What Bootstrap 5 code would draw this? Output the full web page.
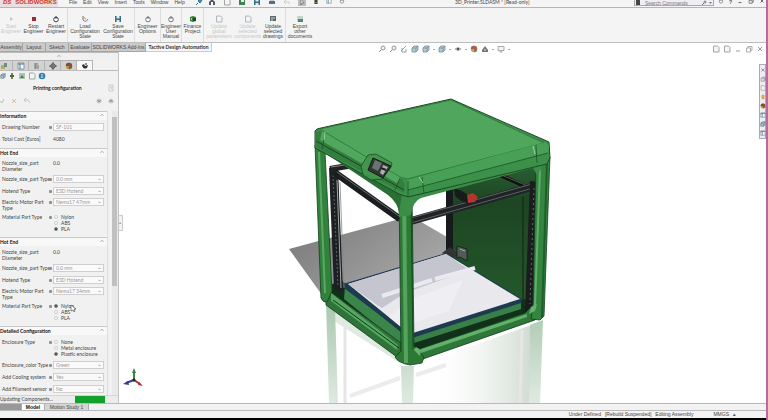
<!DOCTYPE html>
<html lang="en">
<head>
<meta charset="utf-8">
<meta name="viewport" content="width=device-width, initial-scale=1">
<title>3D_Printer.SLDASM</title>
<link href="https://cdn.jsdelivr.net/npm/bootstrap@5.3.0/dist/css/bootstrap.min.css" rel="stylesheet">
<style>
body{font:5px/6px "Liberation Sans",Arial,sans-serif;color:#444;background:#fff;border-right:2px solid #b86a9c}
button,input,select{font:inherit;color:inherit}
button{border:0;background:none;padding:0}
a{color:inherit;text-decoration:none}
svg{display:block;flex:none}
.ic{width:8px;height:8px}
.ic6{width:6px;height:6px}
.titlebar{height:8px;background:#f4f4f4;border-bottom:1px solid #b5b5b5;line-height:5px}
.brand{width:58px;background:#eadede;color:#c8382f;font-weight:700;font-size:6px;padding-left:3px;gap:4px}
.menus{gap:6px;padding-left:11px;width:142px}
.quick{gap:7px;width:240px}
.quick svg,.wctl svg,.menus svg{margin-top:-2px}
.doc{font-family:Lato,sans-serif;padding-left:15px}
.search{width:80px;height:6px;background:#eeeef4;border:1px solid #aaa;border-top:0;color:#777}
.search input{width:56px;height:5px;border:0;background:none;padding:0}
.search input::placeholder{color:#777;opacity:1}
.wctl{gap:5px;padding:0 1px 0 4px}
.ribbon{display:grid;grid-template-columns:22px 23px 23px 34px 33px 26px 21px 22px 30px 27px 25px 28px;height:35px;background:#f4f4f4;border-bottom:1px solid #bdbdbd;line-height:5px}
.ribbon button{padding-top:7px;gap:1px;white-space:nowrap;display:flex;flex-direction:column;align-items:center}
.ribbon .sep{border-right:1px solid #ddd}
.off{color:#bbb;opacity:.8}
.tabrow{height:9px;line-height:8px}
.cmd button{background:#cacaca;border:1px solid #a5a5a5;border-top:0;border-left:0;height:9px;overflow:hidden;white-space:nowrap;display:flex;justify-content:center}
.cmd .on{background:#f6f6f6;border-color:#ccc;font-weight:700;font-family:Lato,sans-serif;color:#333}
.w23{width:23px}.w54{width:54px}.w66{width:66px}
.hud{padding-top:2px;gap:3px;margin-left:166px;opacity:.85}
.hud i{width:2px;height:1px;background:#999;margin-top:4px}
.docctl{gap:3px;padding:2px 2px 0 0;color:#999}
.side{width:119px;background:#f1f1f1;border-right:1px solid #c4c4c4;font-family:Lato,"Liberation Sans",sans-serif}
.grip{height:8px;background:#f0f0f0;border-top:1px solid #bbb}
.ptabs{height:11px;background:#f1f1f1;border-bottom:1px solid #bbb}
.ptabs button{width:16px;background:#d2d2d2;border:1px solid #b2b2b2;border-bottom:0;border-left:0;display:flex;align-items:center;justify-content:center}
.ptabs button:first-child{width:13px;padding-right:4px}
.ptabs .on{background:#f8f8f8}
.minis{height:10px;gap:2px}
.pt{height:14px;color:#222;font-weight:700;padding:0 3px 0 33px}
.okrow{height:16px;padding:0 3px 4px 0;gap:4px}
.scroller{width:6px;background:#e9e9e9}
.thumb{width:5px;height:169px;background:#c0c0c0;margin-top:6px}
.sect{border-right:1px solid #ddd}
.sect h2{font-size:5px;line-height:8px;height:9px;margin:0;border-top:1px solid #c9c9c9;background:#f8f8f8;color:#111;font-weight:700;padding-right:2px}
.prow{display:grid;grid-template-columns:47px 4px minmax(0,1fr);min-height:12px;padding:0 3px 0 2px;align-items:center;white-space:nowrap}
.prow.two{align-items:start;margin-bottom:1px;min-height:12px}
.prow.rad{align-items:start;min-height:18px}
.prow .form-control,.prow .form-select{height:8px;min-height:0;padding:0 2px;font-size:5px;line-height:6px;border:1px solid #cfcfcf;border-radius:0;color:#999;background-color:#fafafa}
.prow .form-select{background-size:3px 3px;background-position:right 2px center}
.prow.two .form-select{margin-top:-1px}
.lock{width:3px;height:3px;background:#8a9296;border-radius:1px}
.two .lock,.rad .lock{margin-top:2px}
.rad label{display:flex;align-items:center;gap:3px;height:6px;padding-left:1px}
.rad input{appearance:none;width:4px;height:4px;margin:0;border:1px solid #ccc;border-radius:50%;background:#fff}
.rad input:checked{background:#444;border-color:#888}
.b1{padding:1px 0 3px}.b2{padding:3px 0 5px}.b4{padding:4px 0 0}
.mt3{margin-top:3px}.mt2{margin-top:2px}
.upd{height:8px;background:#ececec;border-top:1px solid #d5d5d5}
.upd .progress{width:30px;height:7px;border-radius:0;margin-right:13px}
.upd .progress-bar{background:#14a02d}
.handle{left:119px;top:163px;width:4px;height:16px;background:#f2f2f2;border:1px solid #ccc;border-left:0;font-size:3px;line-height:14px}
.pointer{left:70px;top:252px}
.task{right:0;top:12px;width:7px;background:#eee;border:1px solid #aab;gap:3px;padding:2px 0;color:#778}
.btabs{height:8px;background:#f2f2f2;border-top:1px solid #b8b8b8;border-bottom:1px solid #b8b8b8;line-height:6px}
.btabs button{background:#d5d5d5;border-right:1px solid #aaa;white-space:nowrap}
.btabs .nav0{width:22px;background:#999}
.btabs .on{background:#fff;width:23px;font-weight:700;color:#111}
.btabs .ms{width:44px}
.stat{height:7px;background:#f3f3f3;line-height:7px;padding-right:30px}
.foot{height:2px;background:#000}
</style>
<script src="https://cdn.jsdelivr.net/npm/bootstrap@5.3.0/dist/js/bootstrap.bundle.min.js"></script>
</head>
<body class="d-flex flex-column vh-100 overflow-hidden">
<svg width="0" height="0" class="position-absolute" aria-hidden="true">
<defs>
<symbol id="lens" viewBox="0 0 8 8"><circle cx="5" cy="3" r="2" fill="#edf3f6" stroke="#7c8991"/><path d="M3.5 4.5 1 7" stroke="#777"/></symbol>
<symbol id="cube" viewBox="0 0 8 8"><path d="M1 3 3 1h4v4L5 7H1z" fill="#a8c2cd" stroke="#5f7985" stroke-width=".8"/><path d="M1 3h4v4M5 3l2-2" stroke="#5f7985" stroke-width=".8" fill="none"/></symbol>
<symbol id="page" viewBox="0 0 8 8"><path d="M1.5 1h4l1.500 1.500V7H1.500z" fill="#f5f5f5" stroke="#8a9399" stroke-width=".8"/></symbol>
<symbol id="disk" viewBox="0 0 8 8"><path d="M1 1h6v6H1z" fill="#386f88"/><path d="M2.500 1h3v2.500h-3zM2.500 5h3v2h-3z" fill="#dde7ec"/></symbol>
<symbol id="ball" viewBox="0 0 8 8"><circle cx="4" cy="4" r="3.200" fill="#cf8a38"/><path d="M4 4V.8A3.200 3.200 0 0 1 7.200 4z" fill="#b73838"/><path d="M4 4v3.200A3.200 3.200 0 0 0 7.200 4z" fill="#55723e"/><path d="M4 4H.8A3.200 3.200 0 0 1 4 .8z" fill="#5f554d"/></symbol>
<symbol id="ring" viewBox="0 0 8 8"><circle cx="4" cy="4.500" r="2.300" fill="#fff" stroke="currentColor"/><path d="M4 1v3" stroke="currentColor"/></symbol>
<symbol id="list" viewBox="0 0 8 8"><path d="M1 1h6v6H1z" fill="#f5f9fb" stroke="#6d8794" stroke-width=".8"/><path d="M1 2h6M3 2v5" stroke="#4b7d95"/></symbol>
<symbol id="eye" viewBox="0 0 8 8"><path d="M1 4q3-3 6 0-3 3-6 0" fill="#c7d2d8" stroke="#777" stroke-width=".6"/><circle cx="4" cy="4" r="1.200" fill="#333"/></symbol>
<symbol id="tv" viewBox="0 0 8 8"><path d="M1 1.500h6v4H1zM2.500 7h3M4 5.500V7" fill="#f2f2f2" stroke="#7d878d" stroke-width=".8"/></symbol>
<symbol id="win" viewBox="0 0 8 8"><path d="M1.500 3h4v4h-4zM3 3V1.500h4v4H5.500" fill="none" stroke="currentColor" stroke-width=".8"/></symbol>
<symbol id="min" viewBox="0 0 8 8"><path d="M2 6h4" stroke="currentColor"/></symbol>
<symbol id="x" viewBox="0 0 8 8"><path d="m2 2 4 4M6 2 2 6" stroke="currentColor"/></symbol>
<symbol id="target" viewBox="0 0 8 8"><circle cx="4" cy="4" r="2.200" fill="none" stroke="#444"/><path d="M4 0v8M0 4h8" stroke="#444" stroke-width=".8"/></symbol>
<symbol id="chev" viewBox="0 0 8 8"><path d="M2 5l2-2 2 2" fill="none" stroke="#888"/></symbol>
</defs></svg>

<header class="titlebar d-flex flex-nowrap text-nowrap">
 <div class="brand d-flex"><i>DS</i><span>SOLIDWORKS</span></div>
 <nav class="menus d-flex" aria-label="Main menu"><a href="#">File</a><a href="#">Edit</a><a href="#">View</a><a href="#">Insert</a><a href="#">Tools</a><a href="#">Window</a><a href="#">Help</a>
 <svg class="ic ms-1" viewBox="0 0 8 8"><path d="m1 7 2-2m0-2 2 2 2-3-2-1z" stroke="#2e6f91" fill="#4d8fae"/></svg></nav>
 <div class="quick d-flex ps-2">
 <svg class="ic" viewBox="0 0 8 8"><path d="M1 4l3-3 3 3v3H1z" fill="#4d5964"/><path d="M3 4h2v3H3z" fill="#fff"/></svg>
 <svg class="ic"><use href="#page"/></svg>
 <svg class="ic" viewBox="0 0 8 8"><path d="M1 2h6v5H1z" fill="#3c8550"/><path d="M3 1h3v3H3z" fill="#eee"/></svg>
 <svg class="ic"><use href="#disk"/></svg>
 <svg class="ic" viewBox="0 0 8 8"><path d="M1 3h6v3H1z" fill="#4d7282"/><path d="M2 1h4v2H2z" fill="#ccc"/></svg>
 <svg class="ic" viewBox="0 0 8 8"><path d="M2 4h4v2M3 2 1 4l2 2" fill="none" stroke="#ccc"/></svg>
 <svg class="ic" viewBox="0 0 8 8"><path d="M0 0h8v8H0z" fill="#bbb"/><path d="m3 1 3 4H4L3 7z" fill="#fff" stroke="#555" stroke-width=".6"/></svg>
 <svg class="ic6" viewBox="0 0 6 8"><path d="M1 0h4v8H1z" fill="#333"/><path d="M2 1h2v2H2z" fill="#c33"/><path d="M2 5h2v2H2z" fill="#5a5"/></svg>
 <svg class="ic6"><use href="#list"/></svg>
 <svg class="ic6 text-secondary"><use href="#ring"/></svg>
 </div>
 <span class="doc flex-grow-1">3D_Printer.SLDASM * [Read-only]</span>
 <form class="search d-flex"><svg class="ic6" viewBox="0 0 6 6"><path d="M1 0h4v5H1z" fill="#444"/></svg><input class="ms-1" aria-label="Search Commands" placeholder="Search Commands"><svg class="ic6" viewBox="0 0 6 6"><path d="m1 5 2-2" stroke="#777"/><circle cx="4" cy="2" r="1" fill="none" stroke="#777"/></svg><svg class="ic6" viewBox="0 0 6 6"><path d="M2 2h3L3.500 4z" fill="#777"/></svg></form>
 <div class="wctl d-flex"><svg class="ic6 text-secondary"><use href="#ring"/></svg><b>?</b><svg class="ic6"><use href="#min"/></svg><svg class="ic6"><use href="#win"/></svg><svg class="ic6"><use href="#x"/></svg></div>
</header>

<div class="ribbon">
 <button class="off" type="button"><svg class="ic" viewBox="0 0 8 8"><path d="m3 2 3 2-3 2z" fill="#bbb"/></svg>Start<br>Engineer</button>
 <button type="button"><svg class="ic" viewBox="0 0 8 8"><path d="M2 2h4v4H2z" fill="#a82630"/></svg>Stop<br>Engineer</button>
 <button class="sep" type="button"><svg class="ic"><use href="#ring"/></svg>Restart<br>Engineer</button>
 <button type="button"><svg class="ic" viewBox="0 0 8 8"><path d="M2 1v4q3 3 5-1" fill="none" stroke="#7c7c70"/><path d="m2 2 3 2" stroke="#d18b4c"/></svg>Load<br>Configuration<br>State</button>
 <button class="sep" type="button"><svg class="ic"><use href="#disk"/></svg>Save<br>Configuration<br>State</button>
 <button class="sep" type="button"><svg class="ic text-secondary"><use href="#ring"/></svg>Engineer<br>Options</button>
 <button class="sep" type="button"><svg class="ic text-secondary"><use href="#ring"/></svg>Engineer<br>User<br>Manual</button>
 <button class="sep" type="button"><svg class="ic" viewBox="0 0 8 8"><path d="m1 2 3-1 3 1v4L4 7 1 6z" fill="#348334"/><path d="M4 3h3v3H4z" fill="#174e1d"/><path d="M2 3h1v2H2z" fill="#b7db9b"/></svg>Finance<br>Project</button>
 <button class="off" type="button"><svg class="ic"><use href="#page"/></svg>Update<br>global<br>parameters</button>
 <button class="off" type="button"><svg class="ic"><use href="#page"/></svg>Update<br>selected<br>components</button>
 <button class="sep" type="button"><svg class="ic" viewBox="0 0 8 8"><path d="M1 1h6v5H1z" fill="#586a6c"/><path d="M2 3h4M2 5h2" stroke="#c9d9d4"/></svg>Update<br>selected<br>drawings</button>
 <button type="button"><svg class="ic" viewBox="0 0 8 8"><path d="M1 1h6v6H1z" fill="#c3d5cb"/><path d="M2 4h5v3H2z" fill="#4e8870"/></svg>Export<br>other<br>documents</button>
</div>

<div class="tabrow d-flex">
 <div class="cmd d-flex"><button class="w23" type="button">Assembly</button><button class="w23" type="button">Layout</button><button class="w23" type="button">Sketch</button><button class="w23" type="button">Evaluate</button><button class="w54" type="button">SOLIDWORKS Add-Ins</button><button class="w66 on" type="button">Tactive Design Automation</button></div>
 <div class="hud d-flex"><svg class="ic"><use href="#lens"/></svg><svg class="ic"><use href="#lens"/></svg><svg class="ic" viewBox="0 0 8 8"><path d="M1 6 6 1M2 3v4h4V4" fill="none" stroke="#7496a5"/></svg><svg class="ic"><use href="#cube"/></svg><svg class="ic"><use href="#cube"/></svg><i></i><svg class="ic"><use href="#cube"/></svg><i></i><svg class="ic"><use href="#eye"/></svg><i></i><svg class="ic"><use href="#ball"/></svg><svg class="ic" viewBox="0 0 8 8"><path d="M1 5 4 1l3 4v2H1z" fill="#4f6268"/><path d="M3 4h2v2H3z" fill="#b2a66b"/></svg><i></i><svg class="ic"><use href="#tv"/></svg><i></i></div>
 <div class="docctl d-flex ms-auto"><svg class="ic"><use href="#page"/></svg><svg class="ic"><use href="#page"/></svg><svg class="ic"><use href="#min"/></svg><svg class="ic"><use href="#win"/></svg><svg class="ic"><use href="#x"/></svg></div>
</div>

<main class="d-flex flex-grow-1 position-relative overflow-hidden">
<aside class="side d-flex flex-column flex-shrink-0">
 <div class="grip d-flex justify-content-center"><svg class="ic6"><use href="#chev"/></svg></div>
 <div class="ptabs d-flex">
 <button type="button" aria-label="Assembly tree"><svg class="ic" viewBox="0 0 8 8"><path d="M1 3h4v4H1z" fill="#b7ae54"/><path d="M4 1h3v4H4z" fill="#6b8e89"/></svg></button>
 <button type="button" aria-label="Properties"><svg class="ic"><use href="#list"/></svg></button>
 <button type="button" aria-label="Configurations"><svg class="ic" viewBox="0 0 8 8"><path d="M2 1v6M2 2h3M2 4h4M2 6h4" stroke="#777"/></svg></button>
 <button type="button" aria-label="Dimensions"><svg class="ic"><use href="#target"/></svg></button>
 <button type="button" aria-label="Appearance"><svg class="ic"><use href="#ball"/></svg></button>
 <button class="on" type="button" aria-label="Engineer"><svg class="ic" viewBox="0 0 8 8"><path d="M1 3q1 5 5 3l1-3-3 1-1-2z" fill="#333"/><circle cx="5" cy="2" r="1" fill="#666"/></svg></button>
 </div>
 <div class="minis d-flex align-items-center"><svg class="ic6"><use href="#cube"/></svg><svg class="ic" viewBox="0 0 8 8"><path d="M3 1h2v6H3z" fill="#7d8050"/><path d="M2 3h4v2H2z" fill="#464"/></svg><svg class="ic" viewBox="0 0 8 8"><path d="M1 1h6v6H1z" fill="#a9c5ae"/><path d="m2 6 2-3 2 3z" fill="#477b52"/></svg><svg class="ic"><use href="#page"/></svg><svg class="ic" viewBox="0 0 8 8"><circle cx="4" cy="4" r="3.300" fill="#2f83ad"/><path d="M4 3.500V6M4 2v1" stroke="#fff"/></svg></div>
 <div class="pt d-flex align-items-center justify-content-between"><span>Printing configuration</span><svg class="ic text-secondary opacity-75" viewBox="0 0 8 8"><path d="M2 1h4v6H2z" fill="none" stroke="#aaa" stroke-width=".7"/><path d="M3 3h2v1L4 5" fill="none" stroke="#aaa" stroke-width=".7"/></svg></div>
 <div class="okrow d-flex align-items-center"><svg class="ic" viewBox="0 0 8 8"><path d="m0 4 2 2 2-4" fill="none" stroke="#b8c89a"/></svg><svg class="ic" viewBox="0 0 8 8"><path d="m0 2 4 4m0-4L0 6" stroke="#e0bc9c" fill="none"/></svg><svg class="ic" viewBox="0 0 8 8"><path d="M0 3h4l2 3M2 1 0 3l2 2" fill="none" stroke="#c6c6c6"/></svg><svg class="ic ms-auto" viewBox="0 0 8 8"><circle cx="4" cy="4" r="2.500" fill="#ccc"/><path d="m2.500 3 1.500 2 1.500-2" stroke="#888" fill="none"/></svg><svg class="ic" viewBox="0 0 8 8"><circle cx="4" cy="4" r="2.500" fill="#ccc"/><path d="m2.500 5 1.500-2 1.500 2" stroke="#888" fill="none"/></svg></div>
 <div class="d-flex flex-grow-1 overflow-hidden">
 <form class="flex-grow-1">
  <section class="sect"><h2 class="d-flex justify-content-between"><span>Information</span><svg class="ic6"><use href="#chev"/></svg></h2><div class="b1">
   <div class="prow"><label for="dn">Drawing Number</label><i class="lock"></i><input id="dn" class="form-control" value="SF-101"></div>
   <div class="prow"><span>Total Cost [Euros]</span><i></i><span>4080</span></div></div></section>
  <section class="sect"><h2 class="d-flex justify-content-between"><span>Hot End</span><svg class="ic6"><use href="#chev"/></svg></h2><div class="b2">
   <div class="prow two"><span>Nozzle_size_part<br>Diameter</span><i></i><span>0.0</span></div>
   <div class="prow"><label for="n1">Nozzle_size_part Type</label><i class="lock"></i><select id="n1" class="form-select"><option>0.0 mm</option></select></div>
   <div class="prow"><label for="m1">Hotend Type</label><i class="lock"></i><select id="m1" class="form-select"><option>E3D Hotend</option></select></div>
   <div class="prow two mt2"><label for="e1">Electric Motor Part<br>Type</label><i class="lock"></i><select id="e1" class="form-select"><option>Nema17 47mm</option></select></div>
   <div class="prow rad mt3"><span>Material Part Type</span><i class="lock"></i><div><label><input type="radio" name="p1">Nylon</label><label><input type="radio" name="p1">ABS</label><label><input type="radio" name="p1" checked>PLA</label></div></div></div></section>
  <section class="sect"><h2 class="d-flex justify-content-between"><span>Hot End</span><svg class="ic6"><use href="#chev"/></svg></h2><div class="b2">
   <div class="prow two"><span>Nozzle_size_part<br>Diameter</span><i></i><span>0.0</span></div>
   <div class="prow"><label for="n2">Nozzle_size_part Type</label><i class="lock"></i><select id="n2" class="form-select"><option>0.0 mm</option></select></div>
   <div class="prow"><label for="m2">Hotend Type</label><i class="lock"></i><select id="m2" class="form-select"><option>E3D Hotend</option></select></div>
   <div class="prow two mt2"><label for="e2">Electric Motor Part<br>Type</label><i class="lock"></i><select id="e2" class="form-select"><option>Nema17 34mm</option></select></div>
   <div class="prow rad mt3"><span>Material Part Type</span><i class="lock"></i><div><label><input type="radio" name="p2" checked>Nylon</label><label><input type="radio" name="p2">ABS</label><label><input type="radio" name="p2">PLA</label></div></div></div></section>
  <section class="sect"><h2 class="d-flex justify-content-between"><span>Detailed Configuration</span><svg class="ic6"><use href="#chev"/></svg></h2><div class="b4">
   <div class="prow rad"><span>Enclosure Type</span><i class="lock"></i><div><label><input type="radio" name="en">None</label><label><input type="radio" name="en">Metal enclosure</label><label><input type="radio" name="en" checked>Plastic enclosure</label></div></div>
   <div class="prow mt2"><label for="ec">Enclosure_color Type</label><i class="lock"></i><select id="ec" class="form-select"><option>Green</option></select></div>
   <div class="prow"><label for="cs">Add Cooling system</label><i class="lock"></i><select id="cs" class="form-select"><option>Yes</option></select></div>
   <div class="prow"><label for="fs">Add Filament sensor</label><i class="lock"></i><select id="fs" class="form-select"><option>No</option></select></div></div></section>
 </form>
 <div class="scroller ms-1 flex-shrink-0"><div class="thumb"></div></div>
 </div>
 <div class="upd d-flex justify-content-between"><span>Updating Components...</span><div class="progress" role="progressbar" aria-label="Update progress"><div class="progress-bar w-100"></div></div></div>
</aside>
<div class="handle position-absolute">◂</div>
<svg class="pointer position-absolute" width="7" height="9" viewBox="0 0 7 9"><path d="M1 1v6l2-1 1 2 1-1-1-2h2z" fill="#fff" stroke="#555" stroke-width=".7"/></svg>

<div class="flex-grow-1 overflow-hidden">
<svg width="100%" height="100%" viewBox="119 52 647 351" role="img" aria-label="3D printer assembly">
<defs>
<linearGradient id="sh" x1="0" y1="0" x2="1" y2=".6"><stop offset="0" stop-color="#777"/><stop offset="1" stop-color="#a8a8a8"/></linearGradient>
<linearGradient id="rf" x1="0" y1="0" x2="0" y2="1"><stop offset="0" stop-color="#a9c7af"/><stop offset="1" stop-color="#dfeae1"/></linearGradient>
<linearGradient id="rp" x1="0" y1="0" x2="1" y2="0"><stop offset="0" stop-color="#fff" stop-opacity="0"/><stop offset="1" stop-color="#c9d5ca"/></linearGradient>
<linearGradient id="bp" x1="0" y1="0" x2="0" y2="1"><stop offset="0" stop-color="#2d6535"/><stop offset=".3" stop-color="#1d4522"/><stop offset="1" stop-color="#24592c"/></linearGradient>
</defs>
<!-- floor reflection -->
<path d="M424 363 540 322v81H424z" fill="url(#rp)"/>
<path d="M325 303l75 52v8l-66-42z" fill="#dfeae1"/>
<path d="M326 303l9 6 3 94h-9zM401 366h13l-1 37h-11zM530 325l13-5-3 83h-11z" fill="url(#rf)"/>
<path d="M345 316v87M522 330l-2 73" stroke="#e6e6e6" stroke-width="3"/>
<path d="M350 396l50-18M416 375l30-10" stroke="#ececec" stroke-width="4"/>
<!-- shadow -->
<path d="M289 249 396 220l20-1 31 18v22l-99 27-8 10-18-1z" fill="url(#sh)"/>
<!-- back panel and posts -->
<path d="M452 176l86-20-7 152-78-50z" fill="url(#bp)"/>
<path d="M446 185h7v72l-7-2z" fill="#171a1c"/><path d="M442 253l8-6 9 8-7 3z" fill="#333"/>
<path d="M457 246l10 3v12l-7-4-3 1z" fill="#515b58" stroke="#111" stroke-width=".7"/><path d="M460 249l5 2" stroke="#aaa"/>
<path d="M500 175l38 17" stroke="#111" stroke-width="4"/><path d="M499 174l36 15" stroke="#717a76" stroke-width=".7"/>
<!-- base interior -->
<path d="M332 284l10-3 60 45v32l-72-54z" fill="#10301a"/>
<path d="M410 338l115-39 7 13-119 46z" fill="#10301a"/>
<path d="M345 287l56 45v13l-57-46z" fill="#3b844a"/>
<path d="M413 335l108-34v9l-108 35z" fill="#397f48"/>
<!-- print bed -->
<path d="M343 284l103-31 76 46-1 4-109 35-11-7-57-43z" fill="#1c3a50"/>
<path d="M348 284 446 254l74 45-107 34-12-6z" fill="#e8e8ed"/>
<path d="M348 284 446 254l23 16-64 23-23 15-5-3z" fill="#c5c5cf"/>
<path d="M382 296l50-16M435 279l40-11" stroke="#e9e9ef" stroke-width="4"/>
<path d="M463 280l-14 31-48 16-12-10 20-17z" fill="#f2f2f5" opacity=".7"/>
<!-- rails -->
<path d="M329 168l9-1 5 124-9-1z" fill="#1d2022"/>
<path d="M333 175l5 111" stroke="#5d6467" stroke-dasharray="2 2"/>
<path d="M340 182l4 106" stroke="#888" stroke-width=".8"/><path d="M337 180l4 108" stroke="#c8c8c8" stroke-width=".8"/>
<path d="M330 169l29-5" stroke="#222" stroke-width="6"/><path d="M331 167l27-4" stroke="#858585"/>
<path d="M334 172l66 47" stroke="#1b1d1f" stroke-width="7"/><path d="M337 172l62 44" stroke="#777" stroke-width=".9"/>
<path d="M411 221l124-35" stroke="#202325" stroke-width="8"/><path d="M411 218l121-34M411 223l122-35" stroke="#6d7275" stroke-width=".8"/>
<path d="M454 188l8 3 9 6-1 7-9-3-6-5z" fill="#181b1b"/><path d="M467 195l6-2 5 4-3 5-7 1z" fill="#b2382d"/>
<path d="M530 181l8 1-3 128-10 2z" fill="#1a1c1d"/><path d="M534 188l-4 116" stroke="#5f6768" stroke-dasharray="2 3"/><path d="M523 196v104" stroke="#172019"/>
<!-- bottom beams -->
<path d="M326 291l6 2 69 50v17l-75-55z" fill="#2e7338" stroke="#153b1d" stroke-width=".8"/>
<path d="M331 293l67 52-1 5-66-49z" fill="#56a761"/><path d="M333 300l66 48" stroke="#12381a"/>
<path d="M414 351 525 313l9-9 4 3-1 9-2 4-115 40-8 2z" fill="#2e7739" stroke="#153b1d" stroke-width=".8"/>
<path d="M421 349l106-35v3l-106 36z" fill="#61b06b"/><path d="M413 345l110-35" stroke="#12301a" stroke-width="3"/>
<!-- outer posts -->
<path d="M315 145l10 7 7 139-5 11q-4 1-6-4z" fill="#31833c" stroke="#153f1c" stroke-width=".8"/><path d="M319 152l6 141" stroke="#5aa865" stroke-width="2"/>
<path d="M536 162l14-5-6 159-4 4-9-1 2-16z" fill="#338540" stroke="#153f1c" stroke-width=".8"/><path d="M540 168l-5 138" stroke="#63ad6b" stroke-width="2"/><path d="M547 163l-5 155" stroke="#205f2a" stroke-width="2"/>
<path d="M399 192h13l2 154 10 11-2 6-12 2q-12-2-15-8l6-6z" fill="#2c7935" stroke="#153f1c" stroke-width=".8"/><path d="M404 197l2 166" stroke="#54a45e" stroke-width="4"/><path d="M411 197l2 152" stroke="#174a20"/>
<path d="M416 347l5 3-1 6-6-6zM531 307l6-3-2 7-6 3z" fill="#66b36e"/>
<!-- lid -->
<path d="M399 217l1-24 10 1 127-35 9 3-9 13-4-7-112 30q-8 3-10 17z" fill="#3b8d48"/>
<path d="M399 213q-1-10-11-18l-63-42v-8l78 42z" fill="#2a7034"/>
<path d="M315 133q-1-4 6-5L451 99l98 43 1 16-3 6-139 33-9-3-84-46z" fill="#3b9149" stroke="#1d4c27"/>
<path d="M320 129 451 100l93 43-137 36-7-2-77-46z" fill="#51a65d" stroke="#2b6f37" stroke-width=".7"/>
<path d="M315 132l7-1 80 48 3 6-1 8-89-46z" fill="#347f3f"/>
<path d="M322 131l79 47-4 5-77-43z" fill="#52a75e"/><path d="M316 141l88 49" stroke="#153f1c" stroke-width=".9"/>
<path d="M407 180l139-38 3 4-1 7-140 37z" fill="#47a055"/><path d="M408 190l140-37M408 181v15M325 133l-3 16M536 145l1 18M422 177l2 16M400 178l-5 12" stroke="#1d5127" stroke-width=".8" fill="none"/>
<path d="M419 177l4 6M533 146l2 8M325 132l-1 8" stroke="#a0cfa6" stroke-width="1"/>
<!-- display -->
<path d="M361 166l7-11 8-1 16 9-1 4-9 12-11 1-8-5z" fill="#43954e" stroke="#194c23" stroke-width=".8"/>
<path d="M373 158l18 8-8 12-15-8z" fill="#303735" stroke="#151b18"/><path d="M375 160l7 3-4 8-6-3z" fill="#68766f"/><path d="M383 165l5 2-5 8-3-2z" fill="#aab2b4"/><path d="M381 168l5 2" stroke="#222" stroke-width="2"/>
<!-- orientation triad -->
<path d="M134 380v-8" stroke="#3f8142" stroke-width="2"/><path d="M132 373l2-5 2 5z" fill="#3f8142"/><path d="M134 380l6 4" stroke="#b02d32" stroke-width="2"/><path d="M138 385l1-3 4 4z" fill="#b02d32"/><path d="M134 380l-8 3" stroke="#303aa0" stroke-width="2"/><path d="M128 381l-5 3 6 1z" fill="#303aa0"/><circle cx="134" cy="380" r="1.500" fill="#222"/>
</svg>
</div>
<div class="task position-absolute d-flex flex-column align-items-center">
<svg class="ic6"><use href="#x"/></svg><svg class="ic6"><use href="#win"/></svg><svg class="ic6"><use href="#page"/></svg><svg class="ic6" viewBox="0 0 8 8"><path d="M2 1h4v6H2z" fill="#dda454"/></svg><svg class="ic6"><use href="#ball"/></svg><svg class="ic6"><use href="#list"/></svg><svg class="ic6"><use href="#cube"/></svg><svg class="ic6"><use href="#list"/></svg>
</div>
</main>

<div class="btabs d-flex"><button class="nav0" type="button" aria-label="Scroll tabs"></button><button class="on" type="button">Model</button><button class="ms" type="button">Motion Study 1</button></div>
<footer class="stat d-flex justify-content-end text-nowrap gap-1"><span>Under Defined</span><span>[Rebuild Suspended]</span><span>Editing Assembly</span><span class="ms-3">MMGS</span><span>▴</span></footer>
<div class="foot"></div>
</body>
</html>
